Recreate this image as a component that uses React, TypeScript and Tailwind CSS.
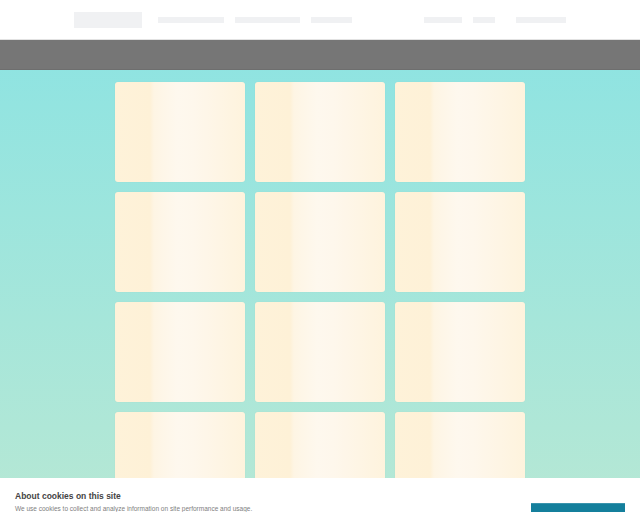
import React from "react";

const Card = () => (
  <div className="h-[100px] rounded-[3px] bg-[linear-gradient(90deg,#fef2d9_0%,#fef1d7_27%,#fef5e4_30%,#fef8ee_48%,#fef7ec_60%,#fef3dd_100%)] shadow-[0_0_1px_rgba(0,0,0,0.08)]" />
);

export default function App() {
  return (
    <div className="min-h-[512px] font-['Liberation_Sans',Arial,sans-serif] bg-[linear-gradient(180deg,#8ae3e3_0%,#b8e8d4_100%)]">
      <header className="h-[40px] bg-white border-b border-[#e2e2e2]">
        <div className="w-[492px] mx-auto h-full flex items-center justify-between">
          <div className="flex items-center">
            <div className="w-[68px] h-[16px] bg-[#f0f1f3]" />
            <div className="ml-[16px] w-[66px] h-[6px] bg-[#f0f1f3]" />
            <div className="ml-[11px] w-[65px] h-[6px] bg-[#f0f1f3]" />
            <div className="ml-[11px] w-[41px] h-[6px] bg-[#f0f1f3]" />
          </div>
          <div className="flex items-center">
            <div className="w-[38px] h-[6px] bg-[#f0f1f3]" />
            <div className="ml-[11px] w-[22px] h-[6px] bg-[#f0f1f3]" />
            <div className="ml-[21px] w-[50px] h-[6px] bg-[#f0f1f3]" />
          </div>
        </div>
      </header>
      <div className="h-[30px] bg-[#767676] border-b border-[#6e6e6e]" />
      <main className="pt-[12px] pb-[20px]">
        <div className="w-[410px] mx-auto grid grid-cols-3 gap-[10px]">
          {Array.from({ length: 12 }).map((_, i) => (
            <Card key={i} />
          ))}
        </div>
      </main>
      <div className="fixed left-0 right-0 top-[478px] h-[80px] bg-white">
        <div className="pl-[15px] pt-[12px]">
          <div className="text-[8.5px] leading-[12px] font-bold text-[#444]">About cookies on this site</div>
          <div className="mt-[2px] text-[6.5px] leading-[10px] text-[#808080]">
            We use cookies to collect and analyze information on site performance and usage.
          </div>
        </div>
        <div className="absolute right-[15px] top-[25px] w-[94px] h-[30px] bg-[#147f9c] border-t border-[#3a94ad]" />
      </div>
    </div>
  );
}
